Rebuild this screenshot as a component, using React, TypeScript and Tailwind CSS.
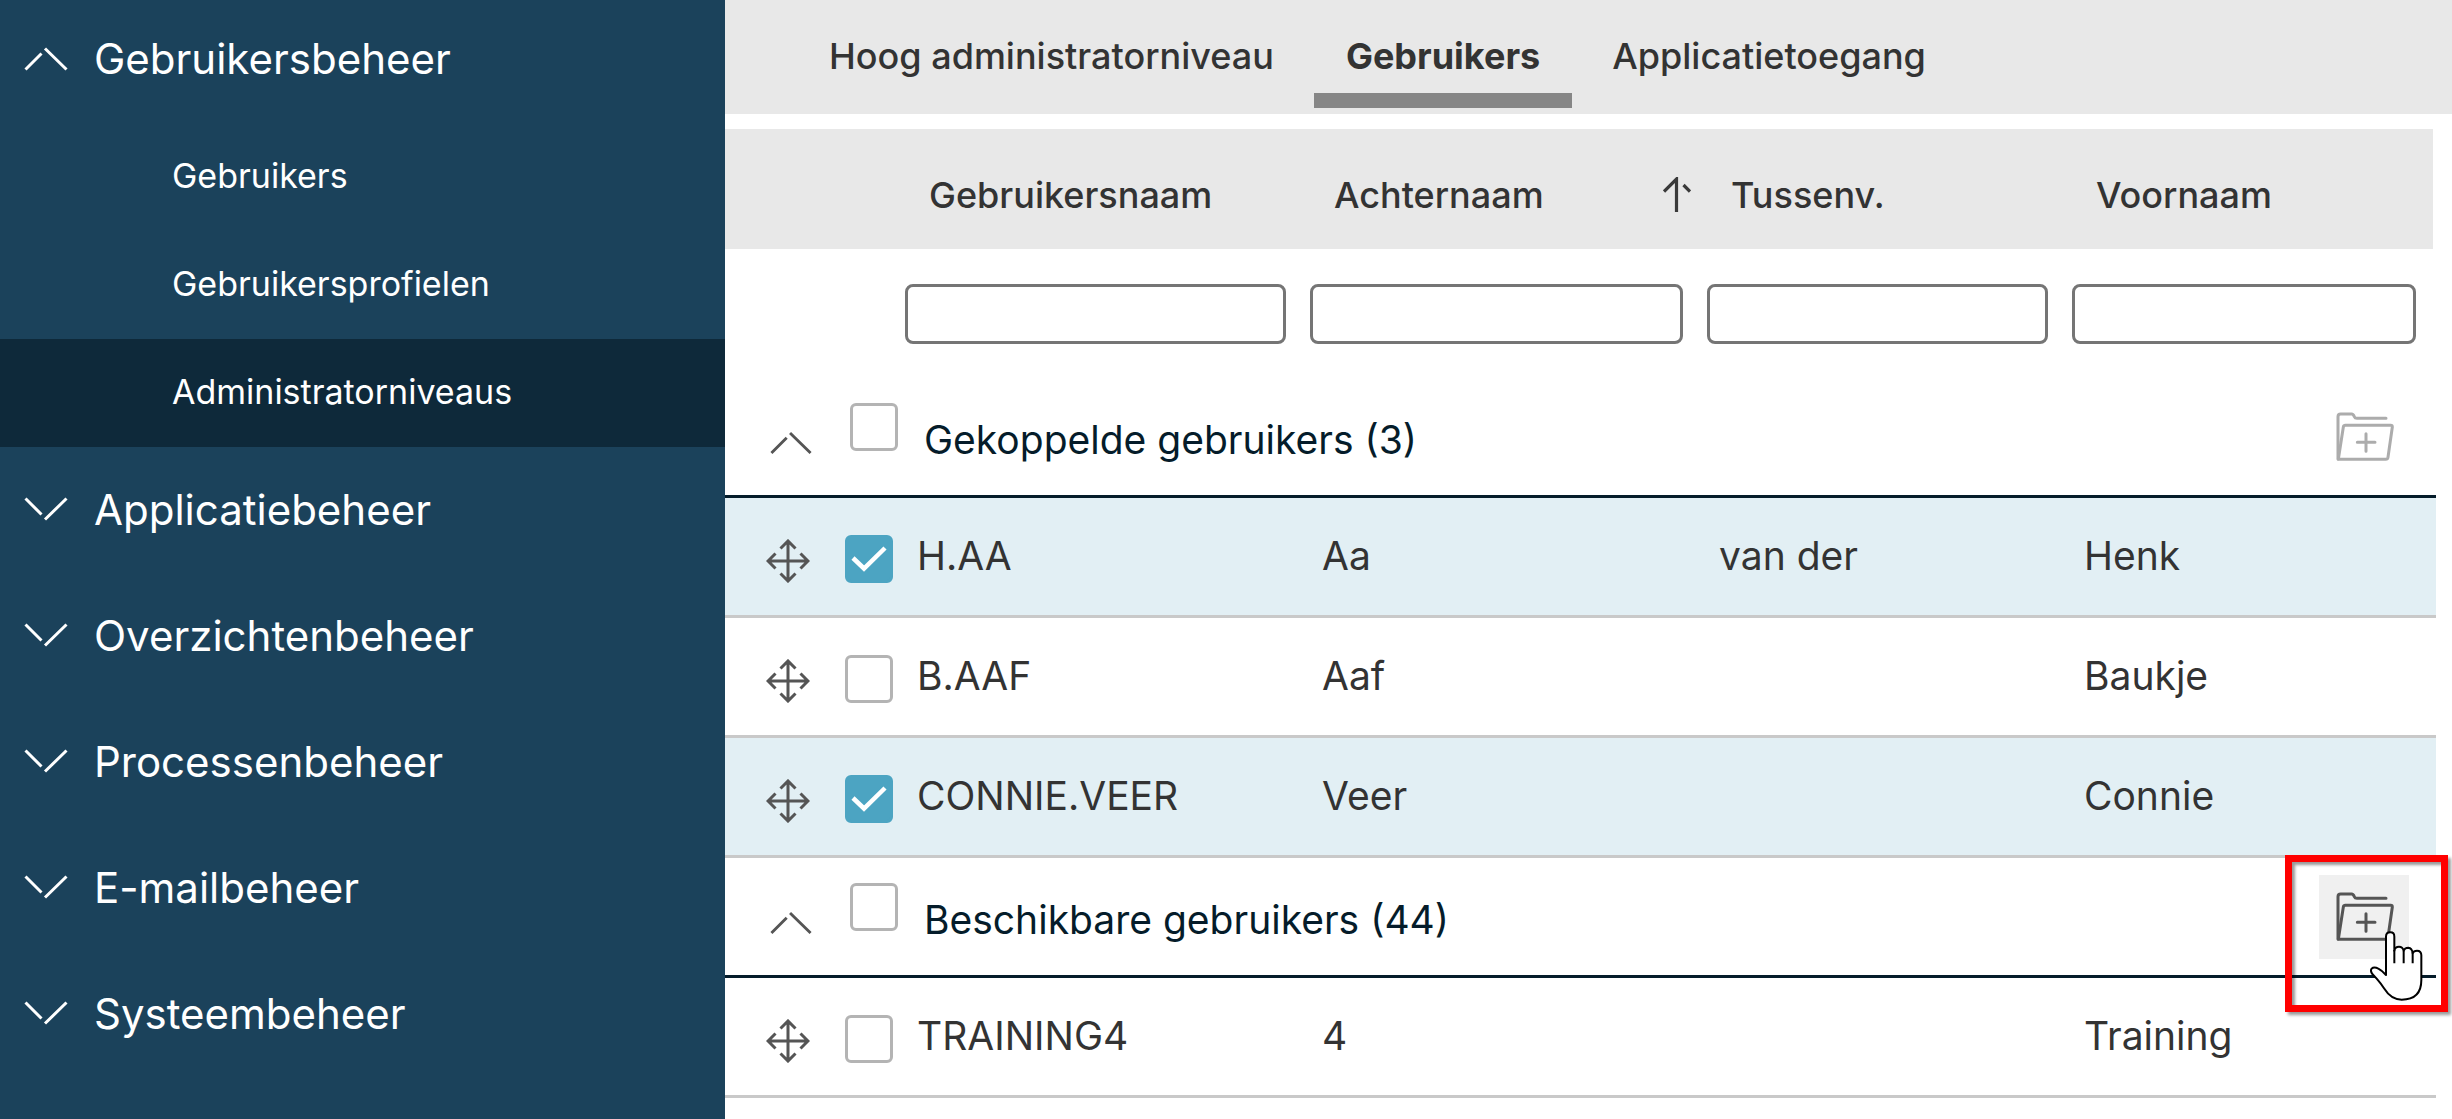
import { useState } from "react";
import clsx from "clsx";

type User = {
  id: string;
  lastName: string;
  infix: string;
  firstName: string;
};

type Group = {
  key: string;
  title: string;
  users: User[];
};

const tabs = ["Hoog administratorniveau", "Gebruikers", "Applicatietoegang"];

const subItems = ["Gebruikers", "Gebruikersprofielen", "Administratorniveaus"];

const sections = [
  "Applicatiebeheer",
  "Overzichtenbeheer",
  "Processenbeheer",
  "E-mailbeheer",
  "Systeembeheer",
];

const columns = ["Gebruikersnaam", "Achternaam", "Tussenv.", "Voornaam"];

const groups: Group[] = [
  {
    key: "linked",
    title: "Gekoppelde gebruikers (3)",
    users: [
      { id: "H.AA", lastName: "Aa", infix: "van der", firstName: "Henk" },
      { id: "B.AAF", lastName: "Aaf", infix: "", firstName: "Baukje" },
      { id: "CONNIE.VEER", lastName: "Veer", infix: "", firstName: "Connie" },
    ],
  },
  {
    key: "available",
    title: "Beschikbare gebruikers (44)",
    users: [{ id: "TRAINING4", lastName: "4", infix: "", firstName: "Training" }],
  },
];

function Chevron({ className }: { className?: string }) {
  return (
    <svg viewBox="0 0 44 24" fill="none" stroke="currentColor" strokeWidth="3" className={className} aria-hidden="true">
      <path d="M1.5 22.5 17.5 6.5M21 1.5 42.5 22.5" />
    </svg>
  );
}

function SortArrow() {
  return (
    <svg viewBox="0 0 28 36" fill="none" stroke="#3a3a3a" strokeWidth="3.2" className="h-9 w-7" aria-hidden="true">
      <path d="M1 14.5 13.5 2V35M20.5 8 27 14.5" />
    </svg>
  );
}

function MoveIcon() {
  return (
    <svg viewBox="0 0 44 44" fill="none" stroke="#555" strokeWidth="3" className="size-11" aria-hidden="true">
      <path d="M22 2V42M2 22H42M14.5 9.5 22 2 29.5 9.5M14.5 34.5 22 42 29.5 34.5M9.5 14.5 2 22 9.5 29.5M34.5 14.5 42 22 34.5 29.5" />
    </svg>
  );
}

function FolderPlus() {
  return (
    <svg viewBox="252 154 180 153" fill="none" stroke="currentColor" strokeWidth="9" strokeLinecap="round" strokeLinejoin="round" className="h-[51px] w-[60px]" aria-hidden="true">
      <path d="M261 298V171Q261 163 269 163H302Q307 163 310 171 312 176 318 176H405" />
      <path d="M262 299 277 202Q278 197 283 197H419Q424 197 424 202L411 293Q410 299 404 299Z" />
      <path d="M345 222V275M319 248H372" />
    </svg>
  );
}

function HandCursor() {
  return (
    <svg viewBox="354 271 159 210" fill="#fff" stroke="#000" strokeWidth="6" strokeLinejoin="round" className="h-[70px] w-[53px]" aria-hidden="true">
      <path d="M402 403V288Q402 275 415 275 427 275 427 288V330Q429 318 441 318 452 318 455 330 458 321 469 321 480 322 482 337 485 330 495 330 508 330 508 344V418Q508 477 449 477 417 477 396 443 388 430 374 414L361 400Q354 390 359 384 366 377 379 384 389 389 402 403Z" />
      <path d="M427 328V368M455 330V368M482 335V368" fill="none" />
    </svg>
  );
}

function Checkbox({ id, label, checked, onChange }: { id: string; label?: string; checked: boolean; onChange: () => void }) {
  return (
    <span className="relative block size-12">
      <input
        id={id}
        type="checkbox"
        aria-label={label}
        checked={checked}
        onChange={onChange}
        className="peer block size-12 appearance-none rounded-md border-3 border-[#b4b4b4] bg-white checked:border-[#4ca4c2] checked:bg-[#4ca4c2]"
      />
      <svg viewBox="0 0 48 48" fill="none" stroke="#fff" strokeWidth="4.5" className="pointer-events-none absolute inset-0 hidden peer-checked:block" aria-hidden="true">
        <path d="M8 23 19 33.5 40 13" />
      </svg>
    </span>
  );
}

function Sidebar() {
  return (
    <nav className="w-[725px] shrink-0 bg-[#1b425b] text-white">
      <button type="button" className="mb-1.5 flex h-[117px] w-full items-center gap-[26px] pl-6 text-left text-[42px]">
        <Chevron className="h-6 w-11" />
        Gebruikersbeheer
      </button>
      <ul className="text-[34px]">
        {subItems.map((item) => (
          <li key={item}>
            <a
              href="#"
              className={clsx("flex h-[108px] items-center pb-1 pl-[172px]", item === "Administratorniveaus" && "bg-[#0e293a]")}
            >
              {item}
            </a>
          </li>
        ))}
      </ul>
      {sections.map((section) => (
        <button key={section} type="button" className="flex h-[126px] w-full items-center gap-[26px] pb-0.5 pl-6 text-left text-[42px]">
          <Chevron className="h-6 w-11 -scale-y-100" />
          {section}
        </button>
      ))}
    </nav>
  );
}

export default function App() {
  const [activeTab, setActiveTab] = useState("Gebruikers");
  const [selected, setSelected] = useState(["H.AA", "CONNIE.VEER"]);

  const toggle = (id: string) =>
    setSelected((prev) => (prev.includes(id) ? prev.filter((s) => s !== id) : [...prev, id]));

  return (
    <div className="flex min-h-screen overflow-hidden bg-white font-['Inter',sans-serif] text-[#333]">
      <Sidebar />

      <main className="min-w-0 flex-1">
        {/* Tabs */}
        <div role="tablist" className="flex gap-2 bg-[#e8e8e8] pb-1.5 pl-18">
          {tabs.map((tab) => (
            <button
              key={tab}
              type="button"
              role="tab"
              aria-selected={tab === activeTab}
              onClick={() => setActiveTab(tab)}
              className={clsx(
                "border-b-15 px-8 pt-8 pb-[13px] text-4xl leading-12",
                tab === activeTab ? "border-[#868686] font-bold" : "border-transparent font-medium"
              )}
            >
              {tab}
            </button>
          ))}
        </div>

        {/* User table */}
        <div className="pt-[15px] pr-4">
          <table className="w-full table-fixed border-separate border-spacing-0 text-left">
            <colgroup>
              <col className="w-[100px]" />
              <col className="w-[68px]" />
              <col className="w-[405px]" />
              <col className="w-[397px]" />
              <col className="w-[365px]" />
              <col />
            </colgroup>
            <thead>
              <tr className="h-[120px] bg-[#e8e8e8] text-4xl">
                <td />
                <td />
                {columns.map((column) => (
                  <th key={column} scope="col" className="pt-3 pr-1 pl-9 font-medium last:border-r-3 last:border-white">
                    <span className="flex items-center justify-between">
                      {column}
                      {column === "Achternaam" && <SortArrow />}
                    </span>
                  </th>
                ))}
              </tr>
              <tr className="h-[129px]">
                <td />
                <td />
                {columns.map((column) => (
                  <td key={column} className="px-3 last:pr-5">
                    <input
                      type="text"
                      aria-label={column}
                      className="block h-[60px] w-full rounded-lg border-3 border-[#757575] bg-white px-3 text-[34px]"
                    />
                  </td>
                ))}
              </tr>
            </thead>
            {groups.map((group) => (
              <tbody key={group.key} className="text-[39px]">
                <tr className="h-[120px]">
                  <th colSpan={6} scope="rowgroup" className="border-b-3 border-[#051c2a] pr-[27px] pl-[45px] font-normal text-[#051c2a]">
                    <div className="flex items-center">
                      <button type="button" aria-label="Inklappen" className="pt-3 text-[#555]">
                        <Chevron className="h-6 w-[42px]" />
                      </button>
                      <div className="pb-5 pl-[38px]">
                        <Checkbox id={group.key} checked={selected.includes(group.key)} onChange={() => toggle(group.key)} />
                      </div>
                      <label htmlFor={group.key} className="flex-1 pt-2 pl-[26px]">
                        {group.title}
                      </label>
                      <div className="relative">
                        <button
                          type="button"
                          aria-label="Toevoegen"
                          className={clsx(
                            "flex h-[84px] w-[90px] items-center justify-center pl-0.5",
                            group.key === "available" ? "bg-[#f0f0f0] text-[#555]" : "text-[#acacac]"
                          )}
                        >
                          <FolderPlus />
                        </button>
                        {group.key === "available" && (
                          <>
                            <div className="pointer-events-none absolute -top-5 -left-[34px] h-[157px] w-[163px] border-7 border-[#ff0000] shadow-[3px_3px_3px_rgba(0,0,0,0.4),inset_3px_3px_3px_rgba(0,0,0,0.4)]" />
                            <div className="pointer-events-none absolute top-14 left-[51px]">
                              <HandCursor />
                            </div>
                          </>
                        )}
                      </div>
                    </div>
                  </th>
                </tr>
                {group.users.map((user) => (
                  <tr
                    key={user.id}
                    className={clsx("h-[120px] *:border-b-3 *:border-[#c9c9c9]", selected.includes(user.id) && "bg-[#e2eff4]")}
                  >
                    <td className="pt-2 pl-[41px]">
                      <MoveIcon />
                    </td>
                    <td className="pt-1 pl-5">
                      <Checkbox
                        id={user.id}
                        label={user.id}
                        checked={selected.includes(user.id)}
                        onChange={() => toggle(user.id)}
                      />
                    </td>
                    <td className="pl-6">{user.id}</td>
                    <td className="pl-6">{user.lastName}</td>
                    <td className="pl-6">{user.infix}</td>
                    <td className="pl-6">{user.firstName}</td>
                  </tr>
                ))}
              </tbody>
            ))}
          </table>
        </div>
      </main>
    </div>
  );
}
